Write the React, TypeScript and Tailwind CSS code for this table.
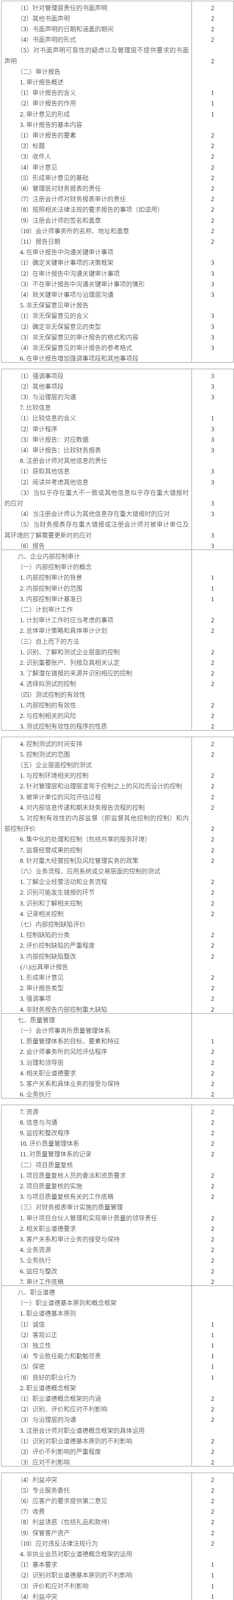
import React from "react";

type R = [string, string?];

const T1: R[] = [
  ["（1）针对管理层责任的书面声明", "2"],
  ["（2）其他书面声明", "2"],
  ["（3）书面声明的日期和涵盖的期间", "2"],
  ["（4）书面声明的形式", "2"],
  ["（5）对书面声明可靠性的疑虑以及管理层不提供要求的书面\n声明", "2"],
  ["（二）审计报告"],
  ["1. 审计报告概述"],
  ["（1）审计报告的含义", "1"],
  ["（2）审计报告的作用", "1"],
  ["2. 审计意见的形成", "1"],
  ["3. 审计报告的基本内容"],
  ["（1）审计报告的要素", "2"],
  ["（2）标题", "2"],
  ["（3）收件人", "2"],
  ["（4）审计意见", "2"],
  ["（5）形成审计意见的基础", "2"],
  ["（6）管理层对财务报表的责任", "2"],
  ["（7）注册会计师对财务报表审计的责任", "2"],
  ["（8）按照相关法律法规的要求报告的事项（如适用）", "2"],
  ["（9）注册会计师的签名和盖章", "2"],
  ["（10）会计师事务所的名称、地址和盖章", "2"],
  ["（11）报告日期", "2"],
  ["4. 在审计报告中沟通关键审计事项"],
  ["（1）确定关键审计事项的决策框架", "3"],
  ["（2）在审计报告中沟通关键审计事项", "3"],
  ["（3）不在审计报告中沟通关键审计事项的情形", "3"],
  ["（4）就关键审计事项与治理层沟通", "3"],
  ["5. 非无保留意见审计报告"],
  ["（1）非无保留意见的含义", "3"],
  ["（2）确定非无保留意见的类型", "3"],
  ["（3）非无保留意见的审计报告的格式和内容", "3"],
  ["（4）非无保留意见的审计报告的参考格式", "3"],
  ["6. 在审计报告增加强调事项段和其他事项段"],
];

const T2: R[] = [
  ["（1）强调事项段", "3"],
  ["（2）其他事项段", "3"],
  ["（3）与治理层的沟通", "3"],
  ["7. 比较信息"],
  ["（1）比较信息的含义", "1"],
  ["（2）审计程序", "3"],
  ["（3）审计报告：对应数据", "3"],
  ["（4）审计报告：比较财务报表", "3"],
  ["8. 注册会计师对其他信息的责任"],
  ["（1）获取其他信息", "3"],
  ["（2）阅读并考虑其他信息", "3"],
  ["（3）当似乎存在重大不一致或其他信息似乎存在重大错报时\n的应对", "3"],
  ["（4）当注册会计师认为其他信息存在重大错报时的应对", "3"],
  ["（5）当财务报表存在重大错报或注册会计师对被审计单位及\n其环境的了解需要更新时的应对", "3"],
  ["（6）报告", "3"],
  ["六、企业内部控制审计"],
  ["（一）内部控制审计的概念"],
  ["1. 内部控制审计的背景", "1"],
  ["2. 内部控制审计的范围", "1"],
  ["3. 内部控制审计基准日", "1"],
  ["（二）计划审计工作"],
  ["1. 计划审计工作时应当考虑的事项", "2"],
  ["2. 总体审计策略和具体审计计划", "2"],
  ["（三）自上而下的方法"],
  ["1. 识别、了解和测试企业层面的控制", "2"],
  ["2. 识别重要账户、列报及其相关认定", "2"],
  ["3. 了解潜在错报的来源并识别相应的控制", "2"],
  ["4. 选择拟测试的控制", "2"],
  ["（四）测试控制的有效性"],
  ["1. 内部控制的有效性", "2"],
  ["2. 与控制相关的风险", "2"],
  ["3. 测试控制有效性的程序的性质", "2"],
];

const T3: R[] = [
  ["4. 控制测试的时间安排", "2"],
  ["5. 控制测试的范围", "2"],
  ["（五）企业层面控制的测试"],
  ["1. 与控制环境相关的控制", "2"],
  ["2. 针对管理层和治理层凌驾于控制之上的风险而设计的控制", "2"],
  ["3. 被审计单位的风险评估过程", "2"],
  ["4. 对内部信息传递和期末财务报告流程的控制", "2"],
  ["5. 对控制有效性的内部监督（即监督其他控制的控制）和内\n部控制评价", "2"],
  ["6. 集中化的处理和控制（包括共享的服务环境）", "2"],
  ["7. 监督经营成果的控制", "2"],
  ["8. 针对重大经营控制及风险管理实务的政策", "2"],
  ["（六）业务流程、应用系统或交易层面的控制的测试"],
  ["1. 了解企业经营活动和业务流程", "2"],
  ["2. 识别可能发生错报的环节", "2"],
  ["3. 识别和了解相关控制", "2"],
  ["4. 记录相关控制", "2"],
  ["（七）内部控制缺陷评价"],
  ["1. 控制缺陷的分类", "2"],
  ["2. 评价控制缺陷的严重程度", "2"],
  ["3. 内部控制缺陷整改", "2"],
  ["(八)出具审计报告"],
  ["1. 形成审计意见", "2"],
  ["2. 审计报告类型", "2"],
  ["3. 强调事项", "2"],
  ["4. 非财务报告内部控制重大缺陷", "2"],
  ["七、质量管理"],
  ["（一）会计师事务所质量管理体系"],
  ["1. 质量管理体系的目标、要素和特征", "1"],
  ["2. 会计师事务所的风险评估程序", "2"],
  ["3. 治理和领导层", "2"],
  ["4. 相关职业道德要求", "2"],
  ["5. 客户关系和具体业务的接受与保持", "2"],
  ["6. 业务执行", "2"],
];

const T4: R[] = [
  ["7. 资源", "2"],
  ["8. 信息与沟通", "2"],
  ["9. 监控和整改程序", "2"],
  ["10. 评价质量管理体系", "2"],
  ["11. 对质量管理体系的记录", "2"],
  ["（二）项目质量复核"],
  ["1. 项目质量复核人员的委派和资质要求", "2"],
  ["2. 项目质量复核的实施", "2"],
  ["3. 与项目质量复核有关的工作底稿", "2"],
  ["（三）对财务报表审计实施的质量管理"],
  ["1. 审计项目合伙人管理和实现审计质量的领导责任", "2"],
  ["2. 相关职业道德要求", "2"],
  ["3. 客户关系和审计业务的接受与保持", "2"],
  ["4. 业务资源", "2"],
  ["5. 业务执行", "2"],
  ["6. 监控与整改", "2"],
  ["7. 审计工作底稿", "2"],
  ["八、职业道德"],
  ["（一）职业道德基本原则和概念框架"],
  ["1. 职业道德基本原则"],
  ["（1）诚信", "1"],
  ["（2）客观公正", "1"],
  ["（3）独立性", "1"],
  ["（4）专业胜任能力和勤勉尽责", "1"],
  ["（5）保密", "1"],
  ["（6）良好的职业行为", "1"],
  ["2. 职业道德概念框架"],
  ["（1）职业道德概念框架的内涵", "2"],
  ["（2）识别、评价和应对不利影响", "2"],
  ["（3）与治理层的沟通", "2"],
  ["3. 注册会计师对职业道德概念框架的具体运用"],
  ["（1）识别对职业道德基本原则的不利影响", "2"],
  ["（2）评价不利影响的严重程度", "2"],
  ["（3）应对不利影响", "2"],
];

const T5: R[] = [
  ["（4）利益冲突", "2"],
  ["（5）专业服务委托", "2"],
  ["（6）应客户的要求提供第二意见", "2"],
  ["（7）收费", "2"],
  ["（8）利益诱惑（包括礼品和款待）", "2"],
  ["（9）保管客户资产", "2"],
  ["（10）应对违反法律法规行为", "2"],
  ["4. 非执业会员对职业道德概念框架的运用"],
  ["（1）基本要求", "1"],
  ["（2）识别对职业道德基本原则的不利影响", "1"],
  ["（3）评价和应对不利影响", "1"],
  ["（4）利益冲突", "1"],
  ["（5）信息的编制和列报", "1"],
  ["（6）专业知识和技能", "1"],
  ["（7）与财务报告和决策相关的经济利益、薪酬和激励", "1"],
  ["（8）利益诱惑（包括礼品和款待）", "1"],
  ["（9）应对违反法律法规行为", "1"],
  ["（10）违反职业道德基本原则的压力", "1"],
  ["（二）审计业务对独立性的要求"],
  ["1. 基本概念和要求"],
  ["（1）独立性的概念", "1"],
  ["（2）网络与网络事务所", "1"],
  ["（3）公众利益实体", "1"],
  ["（4）关联实体", "1"],
  ["（5）与治理层的沟通", "1"],
  ["（6）工作记录", "1"],
  ["（7）保持独立性的期间", "1"],
  ["（8）合并与收购", "1"],
  ["（9）违反本章独立性的规定", "1"],
  ["2. 经济利益"],
  ["（1）一般规定", "3"],
  ["（2）对独立性产生不利影响的情形和防范措施", "3"],
  ["3. 贷款和担保以及商业关系、家庭和私人关系"],
  ["（1）贷款和担保", "3"],
];

const T6: R[] = [
  ["（2）商业关系", "3"],
  ["（3）家庭和私人关系", "3"],
  ["4. 与审计客户发生人员交流"],
  ["（1）与审计客户发生雇佣关系", "3"],
  ["（2）临时借出员工", "3"],
  ["（3）最近曾任审计客户的董事、高级管理人员或特定员工", "3"],
  ["（4）兼任审计客户的董事或高级管理人员", "3"],
  ["5. 与审计客户长期存在业务关系"],
  ["（1）一般规定", "3"],
  ["（2）属于公众利益实体的审计客户", "3"],
  ["6. 为审计客户提供非鉴证服务"],
  ["（1）一般规定", "3"],
  ["（2）承担管理层职责", "3"],
  ["（3）会计和记账服务", "3"],
  ["（4）行政事务性工作", "3"],
  ["（5）评估服务", "3"],
  ["（6）税务服务", "3"],
  ["（7）内部审计服务", "3"],
  ["（8）信息技术系统服务", "3"],
  ["（9）诉讼支持服务", "3"],
  ["（10）法律服务", "3"],
  ["（11）招聘服务", "3"],
  ["（12）公司财务服务", "3"],
  ["7. 收费"],
  ["（1）收费结构", "3"],
  ["（2）逾期收费", "3"],
  ["（3）或有收费", "3"],
  ["8. 影响独立性的其他事项"],
  ["（1）薪酬和业绩评价政策", "3"],
  ["（2）礼品和款待", "3"],
  ["（3）诉讼或诉讼威胁", "3"],
];

// rows are 27.2px on average: four of 27px, then one of 28px
const LINE_27 = "h-[27px] pt-[8px] leading-[19px]";
const LINE_28 = "h-[28px] pt-[8px] leading-[20px]";
const LINE_27C = "h-[26px] pt-[7px] leading-[19px]";
const LINE_28C = "h-[27px] pt-[7px] leading-[20px]";

function lineClass(k: number, chapter: boolean) {
  const long = k % 5 === 4;
  if (chapter) return long ? LINE_28C : LINE_27C;
  return long ? LINE_28 : LINE_27;
}

function Row({ t, n, start }: { t: string; n?: string; start: number }) {
  const chapter = /^[一二三四五六七八九十]+、/.test(t);
  const digit = /^\d/.test(t);
  const half = t.startsWith("(");
  const indent = chapter
    ? "indent-[34px]"
    : digit
    ? "indent-[40px]"
    : half
    ? "indent-[41px]"
    : "indent-[32px]";
  const lines = t.split("\n");
  const two = lines.length === 2;
  const l0 = lineClass(start, chapter);
  const l1 = lineClass(start + 1, false);
  return (
    <div className={chapter ? "flex border-t border-[#858585]" : "flex"}>
      <div className="w-[488px] shrink-0 border-r border-[#858585] px-[7px]">
        {two ? (
          <>
            <div className={`${l0} ${indent} text-justify [text-align-last:justify]`}>
              {lines[0]}
            </div>
            <div className={`${l1} whitespace-nowrap`}>{lines[1]}</div>
          </>
        ) : (
          <div className={`${l0} ${indent} whitespace-nowrap`}>{t}</div>
        )}
      </div>
      <div className="flex flex-1 flex-col justify-end text-center">
        <div className={two ? l1 : l0}>{n}</div>
      </div>
    </div>
  );
}

function Table({ rows, first }: { rows: R[]; first?: boolean }) {
  let k = 0;
  const items = rows.map((r, i) => {
    const start = k;
    k += r[0].includes("\n") ? 2 : 1;
    return <Row key={i} t={r[0]} n={r[1]} start={start} />;
  });
  return (
    <div className={first ? "w-[596px] border border-[#858585]" : "mt-[16px] w-[596px] border border-[#858585]"}>
      {items}
    </div>
  );
}

export default function App() {
  return (
    <div className="bg-white pl-[3px] pt-[2px] font-['Liberation_Serif','Noto_Sans_CJK_SC',serif] text-[16px] font-light text-[#333333]">
      <Table rows={T1} first />
      <Table rows={T2} />
      <Table rows={T3} />
      <Table rows={T4} />
      <Table rows={T5} />
      <Table rows={T6} />
    </div>
  );
}
